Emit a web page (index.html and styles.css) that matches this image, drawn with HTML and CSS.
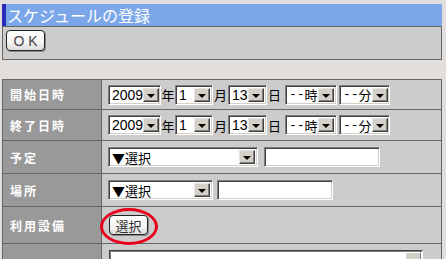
FILE: index.html
```html
<!DOCTYPE html>
<html lang="ja">
<head>
    <meta charset="UTF-8">
    <title>スケジュールの登録</title>
    <link rel="stylesheet" href="styles.css">
</head>
<body>
    <div class="title">スケジュールの登録</div>
    <div class="toolbar">
        <span class="btn btn-ok">OK</span>
    </div>

    <table class="form">
        <tr class="r1">
            <th>開始日時</th>
            <td>
                <div class="line">
                    <span class="sel w53"><span class="val">2009</span><span class="arrow"></span></span>
                    <span class="unit">年</span>
                    <span class="sel w38"><span class="val">1</span><span class="arrow"></span></span>
                    <span class="unit u15">月</span>
                    <span class="sel w39"><span class="val">13</span><span class="arrow"></span></span>
                    <span class="unit u18">日</span>
                    <span class="sel w52"><span class="val jp"><span class="mono">--</span>時</span><span class="arrow"></span></span>
                    <span class="sel w51 sp"><span class="val jp"><span class="mono">--</span>分</span><span class="arrow"></span></span>
                </div>
            </td>
        </tr>
        <tr class="r2">
            <th>終了日時</th>
            <td>
                <div class="line">
                    <span class="sel w53"><span class="val">2009</span><span class="arrow"></span></span>
                    <span class="unit">年</span>
                    <span class="sel w38"><span class="val">1</span><span class="arrow"></span></span>
                    <span class="unit u15">月</span>
                    <span class="sel w39"><span class="val">13</span><span class="arrow"></span></span>
                    <span class="unit u18">日</span>
                    <span class="sel w52"><span class="val jp"><span class="mono">--</span>時</span><span class="arrow"></span></span>
                    <span class="sel w51 sp"><span class="val jp"><span class="mono">--</span>分</span><span class="arrow"></span></span>
                </div>
            </td>
        </tr>
        <tr class="r3">
            <th>予定</th>
            <td>
                <div class="line">
                    <span class="sel w150"><span class="val jp">▼選択</span><span class="arrow"></span></span>
                    <span class="text w116 gap6"></span>
                </div>
            </td>
        </tr>
        <tr class="r4">
            <th>場所</th>
            <td>
                <div class="line">
                    <span class="sel w105"><span class="val jp">▼選択</span><span class="arrow"></span></span>
                    <span class="text w116 gap4"></span>
                </div>
            </td>
        </tr>
        <tr class="r5">
            <th>利用設備</th>
            <td>
                <div class="line">
                    <span class="mark">
                        <span class="btn btn-pick">選択</span>
                        <span class="ring"></span>
                    </span>
                </div>
            </td>
        </tr>
        <tr class="r6">
            <th></th>
            <td>
                <div class="area"><span class="scroll"></span></div>
            </td>
        </tr>
    </table>
</body>
</html>
```

FILE: styles.css
```css
*{
    margin: 0;
    padding: 0;
    box-sizing: border-box;
}

body{
    background: #e2dedb;
    padding: 4px 4px 0 2px;
    font-family: "Liberation Sans", "Noto Sans CJK JP", sans-serif;
    font-size: 13px;
    overflow: hidden;
    height: 259px;
}

.title{
    height: 22px;
    line-height: 22px;
    background: #7ba7e9;
    border-left: 4px solid #2a2ab8;
    color: #fff;
    font-family: "Noto Sans CJK JP", sans-serif;
    font-size: 16px;
    padding-left: 1px;
}

.toolbar{
    height: 34px;
    background: #cccccc;
    border: 1px solid #666;
    padding: 3px 0 0 3px;
}

.btn{
    display: inline-flex;
    align-items: center;
    justify-content: center;
    border: 1px solid #222;
    border-radius: 4px;
    background: linear-gradient(#ffffff, #f4f4f4 60%, #dcdcdc);
    box-shadow: 1px 1px 0 #8a8a8a;
    color: #333;
}

.btn-ok{
    width: 39px;
    height: 21px;
    font-size: 14px;
    letter-spacing: 4px;
    padding-left: 4px;
    color: #444;
}

.btn-pick{
    width: 39px;
    height: 20px;
    font-family: "Noto Sans CJK JP", sans-serif;
    font-size: 13px;
    color: #333;
}

.form{
    margin-top: 19px;
    width: 440px;
    border-collapse: collapse;
    border: 1px solid #666;
}

.form th, .form td{
    border: 1px solid #666;
    padding: 0;
    vertical-align: middle;
}

.form th{
    width: 99px;
    background: #999999;
    color: #fff;
    text-align: left;
    font-family: "Noto Sans CJK JP", sans-serif;
    font-size: 12px;
    font-weight: bold;
    letter-spacing: 2px;
    padding-left: 7px;
}

.form td{
    background: #cccccc;
    padding-left: 6px;
}

.r1{ height: 30px; }
.r2{ height: 31px; }
.r3{ height: 33px; }
.r4{ height: 33px; }
.r5{ height: 37px; }
.r6{ height: 17px; }
.r6 td{ vertical-align: top; padding-top: 6px; padding-left: 7px; }

.line{
    display: flex;
    align-items: center;
}

.sel, .text{
    display: inline-flex;
    height: 20px;
    background: #fff;
    border: 1px solid;
    border-color: #808080 #fff #fff #808080;
    box-shadow: inset 1px 1px #404040, inset -1px -1px #d4d0c8;
    padding: 2px;
}

.sel .val{
    flex: 1;
    display: flex;
    align-items: center;
    font-size: 14px;
    color: #000;
    padding-left: 1px;
    white-space: nowrap;
}

.sel .val.jp{
    font-family: "Noto Sans CJK JP", sans-serif;
    font-size: 13px;
}

.mono{
    font-family: "Liberation Mono", monospace;
    font-size: 13px;
}

.sel .arrow{
    width: 16px;
    flex: none;
    background: #d4d0c8;
    border: 1px solid;
    border-color: #e8e6e2 #404040 #404040 #e8e6e2;
    box-shadow: inset -1px -1px #808080;
    position: relative;
}

.sel .arrow::after{
    content: "";
    position: absolute;
    left: 3px;
    top: 5px;
    border-left: 4px solid transparent;
    border-right: 4px solid transparent;
    border-top: 4px solid #000;
}

.w53{ width: 53px; }
.w38{ width: 38px; }
.w39{ width: 39px; }
.w52{ width: 52px; }
.w51{ width: 51px; }
.w150{ width: 150px; }
.w105{ width: 105px; }
.w116{ width: 116px; }
.sp{ margin-left: 2px; }
.gap4{ margin-left: 4px; }
.gap6{ margin-left: 6px; }

.unit{
    width: 14px;
    text-align: center;
    font-family: "Noto Sans CJK JP", sans-serif;
    font-size: 13px;
    color: #000;
}

.u15{ width: 15px; }
.u18{ width: 18px; text-align: left; padding-left: 1px; }

.mark{
    position: relative;
    display: inline-flex;
    margin-left: 1px;
}

.ring{
    position: absolute;
    left: -9px;
    top: -7px;
    width: 58px;
    height: 37px;
    border: 3px solid #e8001a;
    border-radius: 50%;
}

.area{
    width: 314px;
    height: 11px;
    background: #fff;
    border: 1px solid;
    border-color: #404040 #fff #fff #404040;
    box-shadow: inset 1px 1px #808080;
    display: flex;
    justify-content: flex-end;
    padding: 1px 1px 0;
    border-bottom: 0;
}

.scroll{
    width: 16px;
    background: #d4d0c8;
    border: 1px solid;
    border-color: #fff #808080 #808080 #fff;
    border-bottom: 0;
}
```
